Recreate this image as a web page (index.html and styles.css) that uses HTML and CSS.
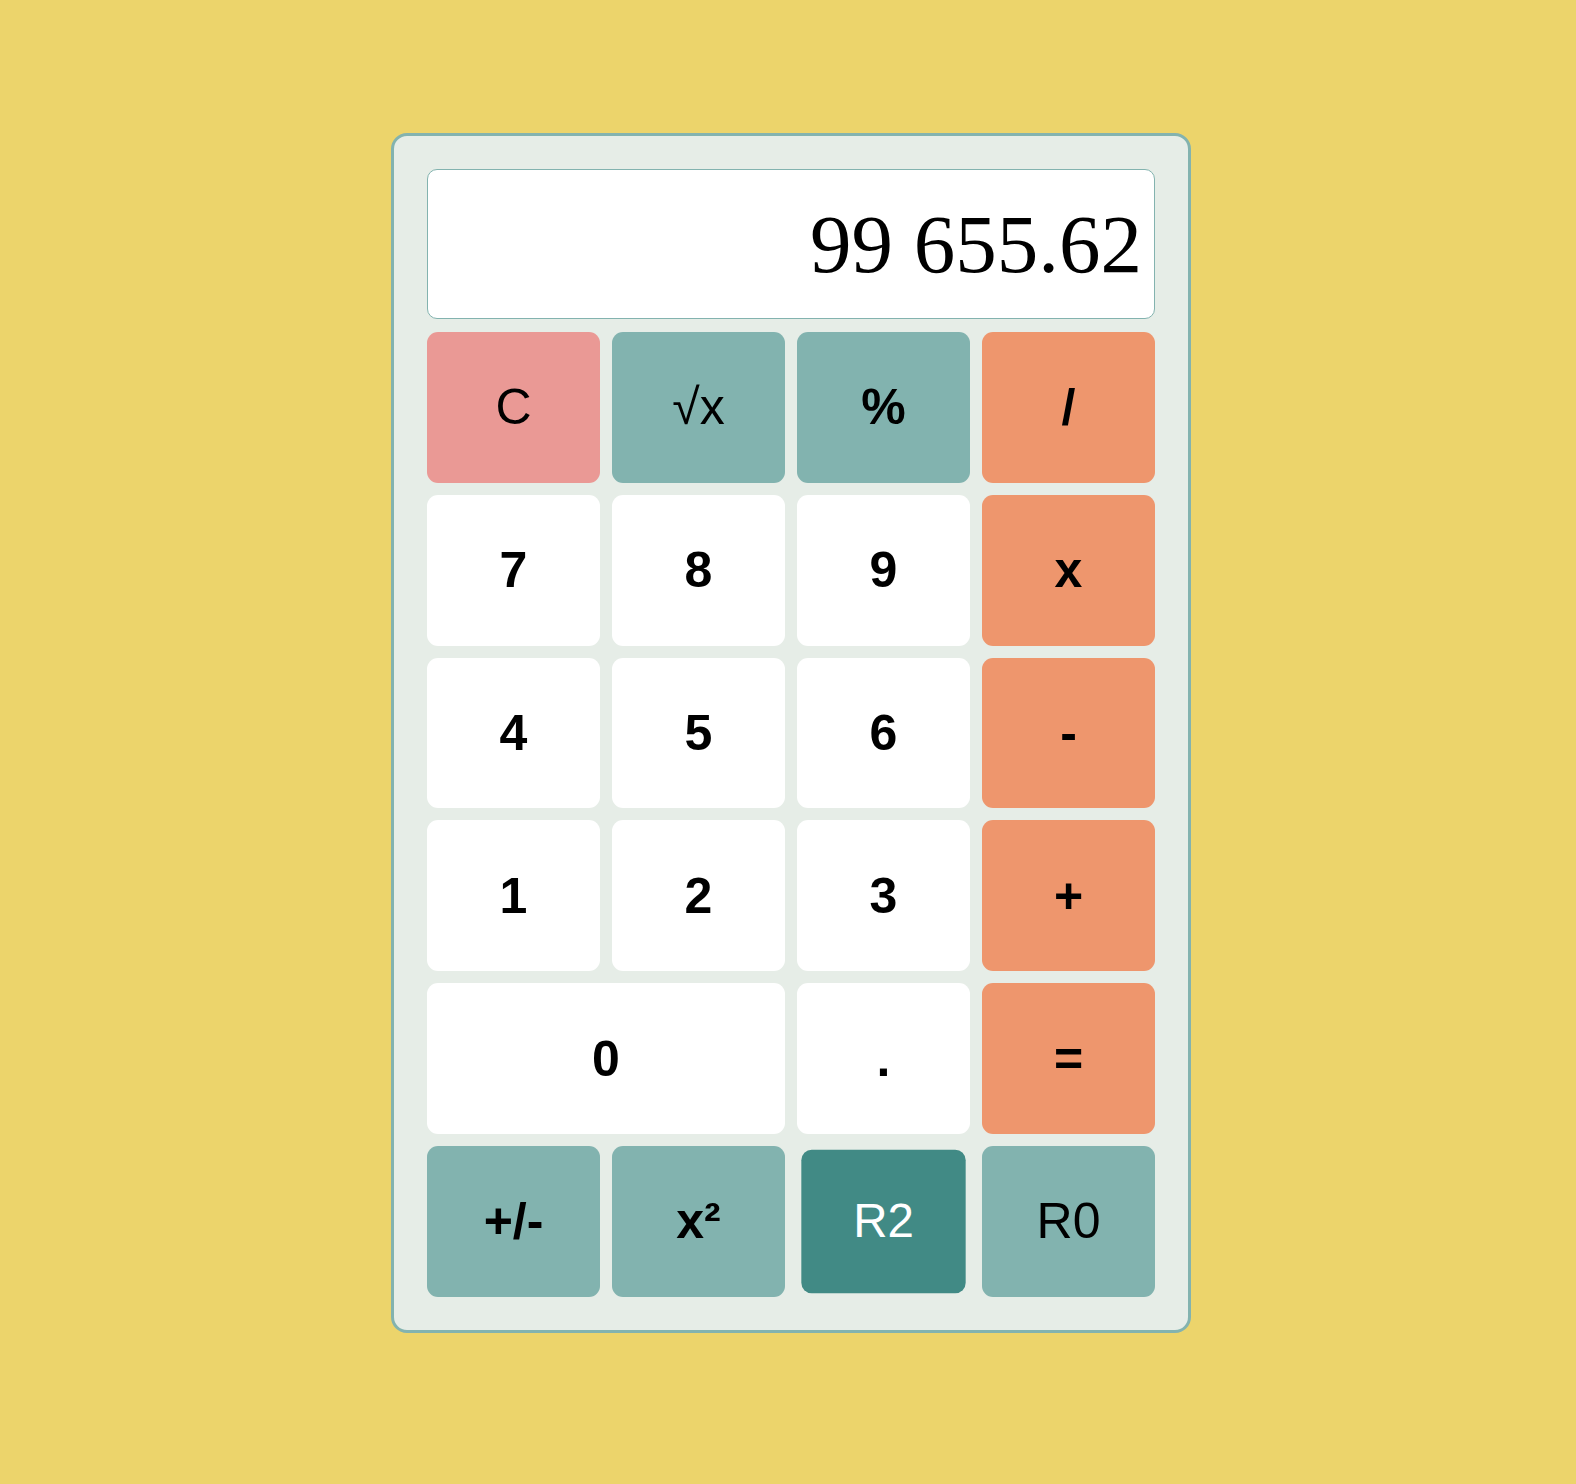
FILE: index.html
```html
<!DOCTYPE html>
<html lang="en">
<head>
<meta charset="utf-8">
<title>Calculator</title>
<link rel="stylesheet" href="styles.css">
</head>
<body>
<div class="calculator">
  <div class="display">99 655.62</div>
  <div class="keys">
    <button class="key key-clear light">C</button>
    <button class="key key-fn light">√x</button>
    <button class="key key-fn">%</button>
    <button class="key key-op">/</button>

    <button class="key key-num">7</button>
    <button class="key key-num">8</button>
    <button class="key key-num">9</button>
    <button class="key key-op">x</button>

    <button class="key key-num">4</button>
    <button class="key key-num">5</button>
    <button class="key key-num">6</button>
    <button class="key key-op">-</button>

    <button class="key key-num">1</button>
    <button class="key key-num">2</button>
    <button class="key key-num">3</button>
    <button class="key key-op">+</button>

    <button class="key key-num key-wide">0</button>
    <button class="key key-num">.</button>
    <button class="key key-op">=</button>

    <button class="key key-fn">+/-</button>
    <button class="key key-fn">x²</button>
    <button class="key key-fn light key-active">R2</button>
    <button class="key key-fn light">R0</button>
  </div>
</div>
</body>
</html>
```
FILE: styles.css
```css
html, body {
  margin: 0;
  padding: 0;
}

body {
  background: #ecd46b;
  min-height: 1484px;
  font-family: "Liberation Sans", Arial, sans-serif;
}

.calculator {
  box-sizing: border-box;
  width: 800px;
  margin: 133px 0 0 391px;
  padding: 33px;
  background: #e6ede7;
  border: 3px solid #83b3af;
  border-radius: 16px;
}

.display {
  box-sizing: border-box;
  height: 150px;
  margin-bottom: 13px;
  padding-right: 12px;
  display: flex;
  align-items: center;
  justify-content: flex-end;
  background: #ffffff;
  border: 1px solid #83b3af;
  border-radius: 10px;
  font-family: "Liberation Serif", "Times New Roman", serif;
  font-size: 83px;
  color: #000;
  white-space: nowrap;
}

.keys {
  display: grid;
  grid-template-columns: repeat(4, 1fr);
  grid-auto-rows: 150.8px;
  gap: 12px;
}

.key {
  border: none;
  border-radius: 11px;
  padding: 0;
  margin: 0;
  font-family: "Liberation Sans", Arial, sans-serif;
  font-size: 50px;
  font-weight: bold;
  color: #000;
  cursor: pointer;
  display: flex;
  align-items: center;
  justify-content: center;
}

.key.light {
  font-weight: normal;
}

.key-num {
  background: #ffffff;
}

.key-wide {
  grid-column: span 2;
}

.key-op {
  background: #ee966d;
}

.key-fn {
  background: #82b3af;
}

.key-clear {
  background: #ea9995;
}

.key-active {
  background: #418a85;
  color: #ffffff;
  transform: scale(0.95);
}
```
